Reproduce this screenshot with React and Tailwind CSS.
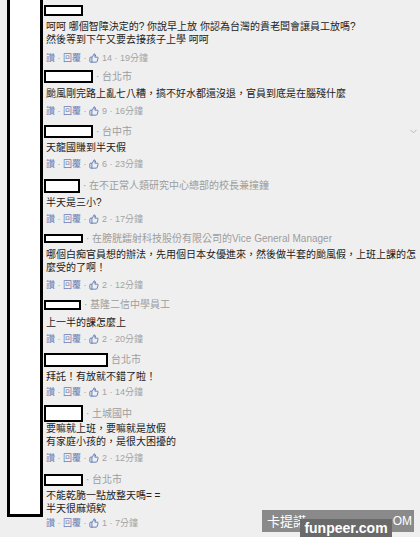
import { ThumbsUp } from "lucide-react";

const comments = [
  { mt: "mt-[5px]", boxW: "w-[39px]", boxH: "h-[11px]", meta: null, textMt: "mt-[4px]", actMt: "mt-[6px]", likes: 14, time: "19分鐘",
    lines: ["呵呵 哪個智障決定的? 你說早上放 你認為台灣的貴老闆會讓員工放嗎?", "然後等到下午又要去接孩子上學 呵呵"] },
  { mt: "mt-[6px]", boxW: "w-[49px]", boxH: "h-[13px]", meta: "· 台北市", textMt: "mt-[4px]", actMt: "mt-[5px]", likes: 9, time: "16分鐘",
    lines: ["颱風剛完路上亂七八糟，搞不好水都還沒退，官員到底是在腦殘什麼"] },
  { mt: "mt-[8px]", boxW: "w-[49px]", boxH: "h-[13px]", meta: "· 台中市", textMt: "mt-[3px]", actMt: "mt-[4px]", likes: 6, time: "23分鐘", chevron: true,
    lines: ["天龍國賺到半天假"] },
  { mt: "mt-[9px]", boxW: "w-[36px]", boxH: "h-[14px]", meta: "· 在不正常人類研究中心總部的校長兼撞鐘", textMt: "mt-[3px]", actMt: "mt-[4px]", likes: 2, time: "17分鐘",
    lines: ["半天是三小?"] },
  { mt: "mt-[9px]", boxW: "w-[39px]", boxH: "h-[9px]", meta: "· 在膀胱鐳射科技股份有限公司的Vice General Manager", textMt: "mt-[5px]", actMt: "mt-[5px]", likes: 2, time: "12分鐘",
    lines: ["哪個白痴官員想的辦法，先用個日本女優進來，然後做半套的颱風假，上班上課的怎", "麼受的了啊！"] },
  { mt: "mt-[9px]", boxW: "w-[37px]", boxH: "h-[10px]", meta: "· 基隆二信中學員工", textMt: "mt-[6px]", actMt: "mt-[4px]", likes: 2, time: "20分鐘",
    lines: ["上一半的課怎麼上"] },
  { mt: "mt-[8px]", boxW: "w-[64px]", boxH: "h-[14px]", meta: "台北市", textMt: "mt-[3px]", actMt: "mt-[3px]", likes: 1, time: "14分鐘",
    lines: ["拜託！有放就不錯了啦！"] },
  { mt: "mt-[7px]", boxW: "w-[39px]", boxH: "h-[17px]", meta: "· 土城國中", textMt: "mt-0", actMt: "mt-[4px]", likes: 2, time: "12分鐘",
    lines: ["要嘛就上班，要嘛就是放假", "有家庭小孩的，是很大困擾的"] },
  { mt: "mt-[10px]", boxW: "w-[39px]", boxH: "h-[12px]", meta: "· 台北市", textMt: "mt-[3px]", actMt: "mt-[2px]", likes: 1, time: "7分鐘",
    lines: ["不能乾脆一點放整天嗎= =", "半天很麻煩欸"] },
];

export default function App() {
  return (
    <div
      className="relative flex h-[537px] w-[420px] overflow-hidden bg-[#efefef]"
      style={{ fontFamily: '"Liberation Sans", "Noto Sans CJK TC", sans-serif' }}
    >
      <div className="ml-[7px] h-[517px] w-[36px] shrink-0 border-x-[3px] border-b-[3px] border-black bg-white" />
      <div className="flex min-w-0 flex-1 flex-col">
        {comments.map((c, i) => (
          <Comment key={i} c={c} />
        ))}
      </div>

      {/* watermarks */}
      <div className="absolute left-[262px] top-[510px] flex h-[22px] w-[152px] items-center justify-between whitespace-nowrap bg-[#8a8a8a] pl-[5px] pr-[2px] text-[13px] leading-none text-white">
        <span>卡提諾</span>
        <span className="text-[12px]">OM</span>
      </div>
      <div className="absolute left-[300px] top-[519px] flex h-[18px] w-[92px] items-center justify-center bg-[#6a6a6a] text-[14px] font-bold leading-none text-white">
        funpeer.com
      </div>
    </div>
  );
}

function Comment({ c }) {
  return (
    <div className={c.mt}>
      <div className={`flex items-center ${c.boxH}`}>
        <div className={`ml-[1px] h-full shrink-0 border-2 border-black bg-white ${c.boxW}`} />
        {c.meta && (
          <span className="ml-[3px] whitespace-nowrap text-[10px] leading-[12px] text-[#9d9d9d]">{c.meta}</span>
        )}
        {c.chevron && (
          <svg className="ml-auto mr-[3px]" width="7" height="5" viewBox="0 0 7 5">
            <path d="M0.5 0.8 L3.5 3.8 L6.5 0.8" fill="none" stroke="#b8b8b8" strokeWidth="1" />
          </svg>
        )}
      </div>
      <div className={`pl-[3px] text-[10px] leading-[13px] text-[#222222] ${c.textMt}`}>
        {c.lines.map((l, i) => (
          <div key={i} className="whitespace-nowrap">{l}</div>
        ))}
      </div>
      <div className={`flex h-[12px] items-center whitespace-nowrap pl-[3px] text-[9px] leading-[12px] text-[#a3a3a3] ${c.actMt}`}>
        <span className="text-[#6f82b5]">讚</span>
        <span className="px-[2.5px]">·</span>
        <span className="text-[#6f82b5]">回覆</span>
        <span className="px-[2.5px]">·</span>
        <ThumbsUp size={10} strokeWidth={2.2} className="text-[#5a76b8]" />
        <span className="ml-[3px]">{c.likes}</span>
        <span className="px-[2.5px]">·</span>
        <span>{c.time}</span>
      </div>
    </div>
  );
}
